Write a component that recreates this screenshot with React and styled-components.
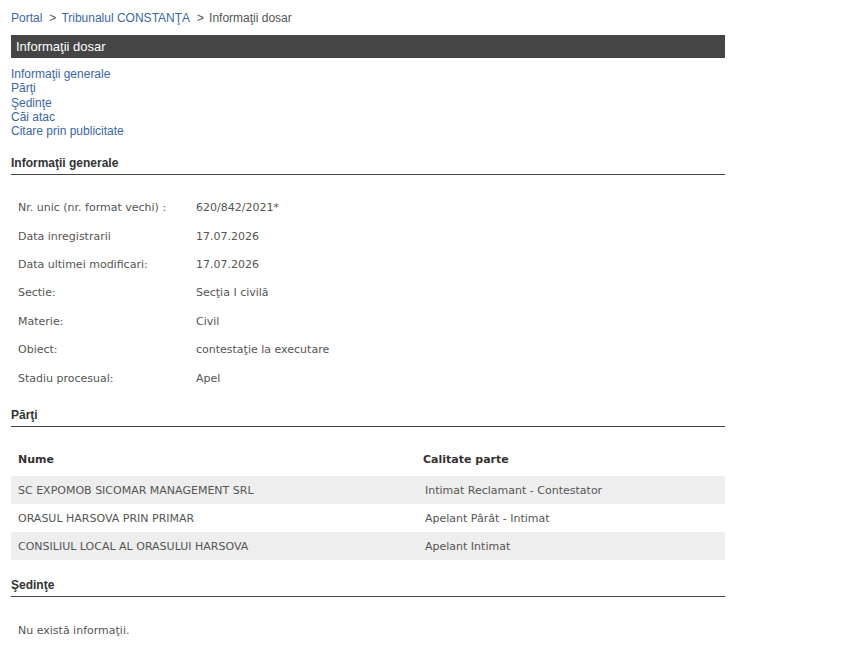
import React from 'react';
import styled, { createGlobalStyle } from 'styled-components';

const GlobalStyle = createGlobalStyle`
  body {
    margin: 0;
    background: #fff;
    font-family: "Liberation Sans", Arial, sans-serif;
  }
`;

const info = [
  ['Nr. unic (nr. format vechi) :', '620/842/2021*'],
  ['Data inregistrarii', '17.07.2026'],
  ['Data ultimei modificari:', '17.07.2026'],
  ['Sectie:', 'Secţia I civilă'],
  ['Materie:', 'Civil'],
  ['Obiect:', 'contestaţie la executare'],
  ['Stadiu procesual:', 'Apel'],
];

const parti = [
  ['SC EXPOMOB SICOMAR MANAGEMENT SRL', 'Intimat Reclamant - Contestator'],
  ['ORASUL HARSOVA PRIN PRIMAR', 'Apelant Pârât - Intimat'],
  ['CONSILIUL LOCAL AL ORASULUI HARSOVA', 'Apelant Intimat'],
];

export default function App() {
  return (
    <Page>
      <GlobalStyle />
      <Breadcrumb>
        <Link href="#">Portal</Link>
        <Sep>&gt;</Sep>
        <Link href="#">Tribunalul CONSTANŢA</Link>
        <Sep>&gt;</Sep>
        <span>Informaţii dosar</span>
      </Breadcrumb>
      <TitleBar>Informaţii dosar</TitleBar>
      <Nav>
        <Link href="#">Informaţii generale</Link>
        <Link href="#">Părţi</Link>
        <Link href="#">Şedinţe</Link>
        <Link href="#">Căi atac</Link>
        <Link href="#">Citare prin publicitate</Link>
      </Nav>

      <SectionTitle>Informaţii generale</SectionTitle>
      <InfoTable>
        {info.map(([k, v]) => (
          <InfoRow key={k}>
            <span>{k}</span>
            <span>{v}</span>
          </InfoRow>
        ))}
      </InfoTable>

      <SectionTitle $gap={13}>Părţi</SectionTitle>
      <PartiTable>
        <HeadRow>
          <span>Nume</span>
          <span>Calitate parte</span>
        </HeadRow>
        {parti.map(([n, c], i) => (
          <PartRow key={n} $shaded={i % 2 === 0}>
            <span>{n}</span>
            <span>{c}</span>
          </PartRow>
        ))}
      </PartiTable>

      <SectionTitle $gap={18}>Şedinţe</SectionTitle>
      <Empty>Nu există informaţii.</Empty>
    </Page>
  );
}

const Page = styled.div`
  width: 714px;
  padding: 11px 0 20px 11px;
`;

const Breadcrumb = styled.div`
  font-size: 12px;
  color: #555;
  display: flex;
  gap: 5px;
  height: 14px;
  line-height: 14px;
`;

const Sep = styled.span`
  color: #555;
  margin-left: 2px;
`;

const Link = styled.a`
  color: #3b67a8;
  text-decoration: none;
`;

const TitleBar = styled.div`
  margin-top: 10px;
  height: 23px;
  line-height: 23px;
  background: #454545;
  color: #fff;
  font-size: 13px;
  padding-left: 5px;
`;

const Nav = styled.div`
  display: flex;
  flex-direction: column;
  margin-top: 9px;
  font-size: 12px;
  line-height: 14.3px;
`;

const SectionTitle = styled.div`
  margin-top: ${(p) => p.$gap ?? 18}px;
  font-size: 12px;
  font-weight: bold;
  color: #333;
  padding-bottom: 4px;
  border-bottom: 1px solid #444;
  line-height: 14px;
`;

const InfoTable = styled.div`
  padding: 18px 0 3px 7px;
  font-family: "DejaVu Sans", Verdana, sans-serif;
  font-size: 11px;
  color: #555;
`;

const InfoRow = styled.div`
  display: grid;
  grid-template-columns: 178px 1fr;
  height: 28.4px;
  align-items: center;
`;

const PartiTable = styled.div`
  margin-top: 21px;
  font-family: "DejaVu Sans", Verdana, sans-serif;
  font-size: 11px;
  color: #555;
`;

const HeadRow = styled.div`
  box-sizing: border-box;
  display: grid;
  grid-template-columns: 405px 1fr;
  padding: 0 0 6px 7px;
  height: 28px;
  align-items: center;
  font-weight: bold;
  color: #333;
`;

const PartRow = styled.div`
  display: grid;
  grid-template-columns: 407px 1fr;
  padding-left: 7px;
  height: 28px;
  align-items: center;
  background: ${(p) => (p.$shaded ? '#eeeeee' : '#fff')};
`;

const Empty = styled.div`
  padding: 27px 0 0 7px;
  font-family: "DejaVu Sans", Verdana, sans-serif;
  font-size: 11px;
  color: #555;
`;
